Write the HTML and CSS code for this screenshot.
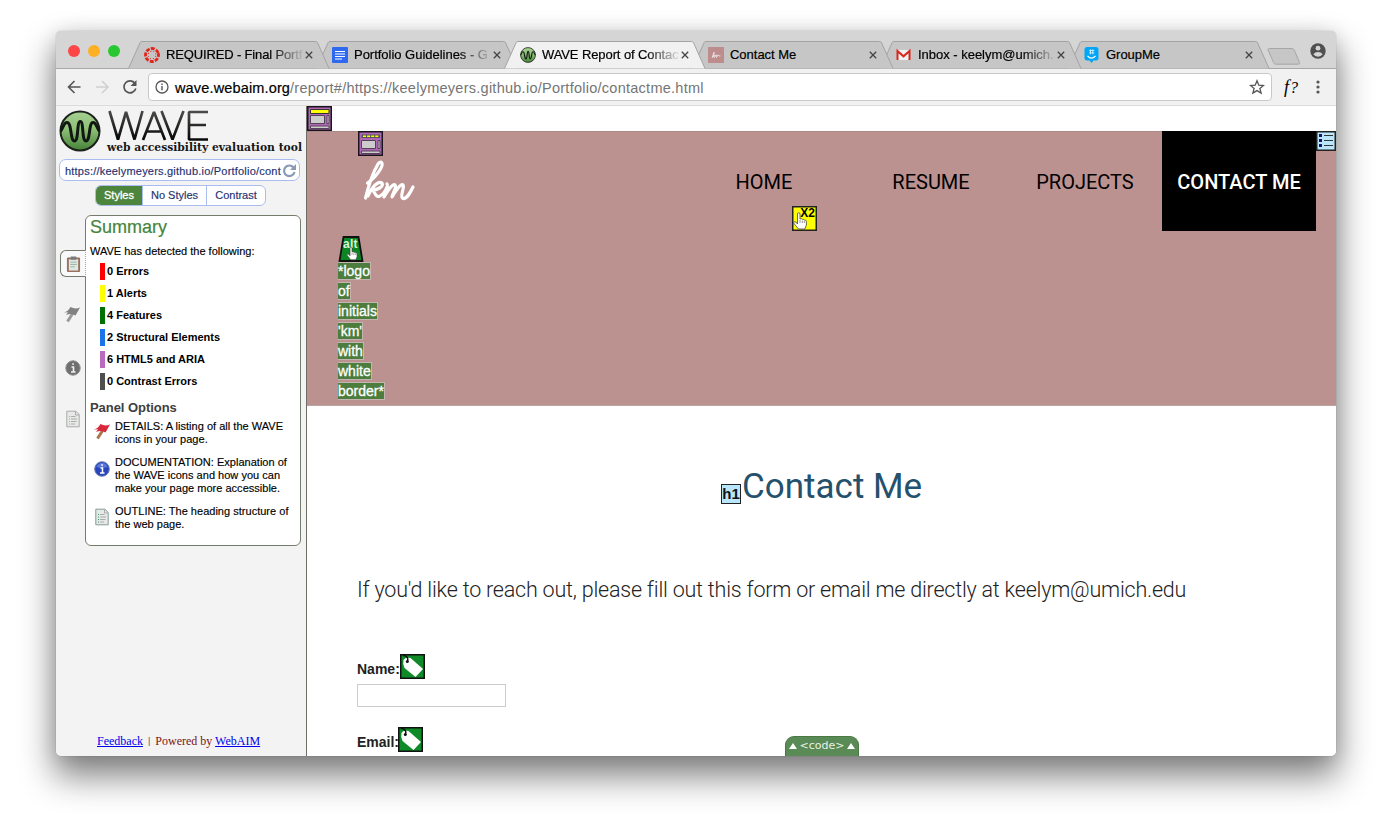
FILE: index.html
```html
<!DOCTYPE html>
<html lang="en">
<head>
<meta charset="utf-8">
<title>WAVE Report of Contact Me</title>
<link rel="stylesheet" href="styles.css">
</head>
<body>
<svg width="0" height="0" class="defs">
  <defs>
    <linearGradient id="leaf" x1="0" y1="0" x2="0" y2="1"><stop offset="0" stop-color="#a5cf90"/><stop offset=".45" stop-color="#8fc078"/><stop offset="1" stop-color="#458236"/></linearGradient>
    <linearGradient id="ink" x1="0" y1="0" x2="0" y2="1"><stop offset="0" stop-color="#4a4a48"/><stop offset="1" stop-color="#080808"/></linearGradient>
    <symbol id="wave-mark" viewBox="0 0 42 42"><circle cx="21" cy="21" r="19.5" fill="url(#leaf)" stroke="#1b211a" stroke-width="2"/><path d="M1.500 21C4 20 4 12.500 8 12.500C13 12.500 11 31 15.500 31C20 31 17.500 11.500 21.300 11.500C25 11.500 22.500 31 27 31C31.500 31 29.500 12.500 34 12.500C38 12.500 38 20 40.500 21" fill="none" stroke="#111711" stroke-width="3"/></symbol>
    <symbol id="tab-shape" viewBox="0 0 202 28"><path d="M.5 27.500L12 1.800Q12.600.5 14 .5H187.500Q189 .5 189.600 1.800L201 27.500" stroke="#a3a3a3"/></symbol>
    <symbol id="close" viewBox="0 0 8 8"><path d="M.8.8L7.200 7.200M7.200.8L.8 7.200" stroke="#444" stroke-width="1.300"/></symbol>
    <symbol id="hand" viewBox="0 0 14 18"><path d="M4.500 10V2Q4.500.8 5.700.8T7 2v5q2-.8 2.500.5q1.500-.5 2 .6q1.700-.3 1.900 1.200V13L11.800 17H5.500L1 11.500Q.4 10 1.700 9.700T4.500 12z" fill="#fff" stroke="#444" stroke-width=".8"/><path d="M7 8v3M9.300 8.500V11M11.300 9v2" stroke="#666" stroke-width=".7"/></symbol>
    <symbol id="label-tag" viewBox="0 0 25 25"><path fill="#0f8a28" stroke="#111" stroke-width="1.500" d="M.75.75h23.500v23.500H.75z"/><path d="M3.500 6Q5 3 10.500 4L23 15L15.500 23L4.500 14Q2.500 10 3.500 6Z" fill="#fff"/><path d="M3 1.500C7 1.500 8.500 4 7.500 7.500" fill="none" stroke="#111" stroke-width="1.500"/><circle cx="7.300" cy="7.500" r="1.500" fill="#111"/></symbol>
    <symbol id="flag" viewBox="0 0 18 18"><path d="M10 8L4.500 16.500" stroke="currentColor" stroke-width="3"/><path d="M1 7.500Q5 6.500 7.500 2Q12 4.500 17 2.500L12.500 10.500Q8 8 3 10L5 7.300Z"/></symbol>
    <symbol id="sheet" viewBox="0 0 14 18"><path d="M.8 1.200H10L13.200 4.500V16.800H.8z" fill="#e7e9e7" stroke="currentColor"/><path d="M9.500 1.500v3.500H13M5 6.500h4.500M5 9h6M5 11.500h5.500M5 14h4" fill="none" stroke="#a2a6a4" stroke-width=".9"/><path d="M3 6.500h1M3 9h1M3 11.500h1M3 14h1"/></symbol>
  </defs>
</svg>
<div class="window">
  <div class="tabstrip">
    <div class="lights"><i class="red"></i><i class="amber"></i><i class="green"></i></div>
    <div class="tab t1"><svg class="shape"><use href="#tab-shape"/></svg>
      <svg class="fav" viewBox="0 0 16 16"><circle cx="8" cy="8" r="6.500" fill="none" stroke="#e1251b" stroke-width="2.800" stroke-dasharray="3.800 1.305" transform="rotate(-17 8 8)"/><circle cx="8" cy="8" r="3.900" fill="none" stroke="#e1251b" stroke-width="1" stroke-dasharray="1 2.063" transform="rotate(14 8 8)"/></svg>
      <span class="title fade">REQUIRED - Final Portf</span><svg class="x"><use href="#close"/></svg></div>
    <div class="tab t2"><svg class="shape"><use href="#tab-shape"/></svg>
      <svg class="fav" viewBox="0 0 16 16"><rect width="16" height="16" rx="1" fill="#2e69f0"/><path d="M3 4.500h10M3 7h10M3 9.500h10M3 12h7" stroke="#fff" stroke-width="1.200"/></svg>
      <span class="title fade">Portfolio Guidelines - G</span><svg class="x"><use href="#close"/></svg></div>
    <div class="tab t3 active"><svg class="shape"><use href="#tab-shape"/></svg>
      <svg class="fav wavefav"><use href="#wave-mark"/></svg>
      <span class="title fade">WAVE Report of Contac</span><svg class="x"><use href="#close"/></svg></div>
    <div class="tab t4"><svg class="shape"><use href="#tab-shape"/></svg>
      <svg class="fav" viewBox="0 0 16 16"><rect width="16" height="16" fill="#bc8d8c"/><path d="M4 10.500Q7 6 6.200 5Q5 6 4.800 10.500Q6.500 6.800 6.800 8T6.500 10.500Q8.500 6.500 8.500 8T8.500 10.500Q10.500 6.500 10.500 8T12.500 9" fill="none" stroke="#f2e4e4" stroke-width=".8"/></svg>
      <span class="title">Contact Me</span><svg class="x"><use href="#close"/></svg></div>
    <div class="tab t5"><svg class="shape"><use href="#tab-shape"/></svg>
      <svg class="fav" viewBox="0 0 16 16"><path d="M1.500 3h12v10h-12z" fill="#f1f1f1"/><path d="M1.500 13V4L7.500 9.300L13.500 4V13" fill="none" stroke="#d5281f" stroke-width="2"/></svg>
      <span class="title fade">Inbox - keelym@umich.</span><svg class="x"><use href="#close"/></svg></div>
    <div class="tab t6"><svg class="shape"><use href="#tab-shape"/></svg>
      <svg class="fav" viewBox="0 0 16 16"><path d="M3 0H12Q14.500 0 14.500 2.500V11Q14.500 13.500 12 13.500H9.500L7.500 16L5.500 13.500H3Q.5 13.500.5 11V2.500Q.5 0 3 0Z" fill="#00a6f7"/><path d="M3.500 8.800Q7.500 13.500 11.500 8.800" stroke="#fff" stroke-width="1.300" fill="none"/><path d="M6.500 2.300v5M8.800 2.300v5M5 3.600h5.300M5 5.900h5.300" stroke="#fff" stroke-width=".7"/></svg>
      <span class="title">GroupMe</span><svg class="x"><use href="#close"/></svg></div>
    <svg class="newtab" viewBox="0 0 34 17"><path d="M2.500.5H25Q26.500.5 27.200 2L32.500 14.500Q33 16 31.500 16.200H8.500Q7.300 16 6.700 14.800L1 2Q.5.8 2.500.5Z" fill="#c6c6c6" stroke="#a6a6a6"/></svg>
    <svg class="person" viewBox="0 0 16 16"><circle cx="8" cy="8" r="7.700" fill="#505050"/><circle cx="8" cy="5.200" r="2.400" fill="#d5d5d5"/><path d="M3.300 11.300Q5 9 8 9T12.700 11.300Q11 13.700 8 13.700T3.300 11.300Z" fill="#d5d5d5"/></svg>
  </div>
  <div class="toolbar">
    <svg class="nav-ico" viewBox="0 0 16 16"><path d="M14.500 8H2.500M8.500 2l-6 6 6 6" fill="none" stroke="#555" stroke-width="1.600"/></svg>
    <svg class="nav-ico" viewBox="0 0 16 16"><path d="M2 8h12M8 2l6 6-6 6" fill="none" stroke="#d0d0d0" stroke-width="1.600"/></svg>
    <svg class="nav-ico" viewBox="0 0 16 16"><path d="M13 4.500A6 6 0 1 0 13.800 9.500" fill="none" stroke="#555" stroke-width="1.700"/><path d="M14.500 1V7H8.500z" fill="#555"/></svg>
    <div class="omnibox">
      <svg class="info" viewBox="0 0 14 14"><circle cx="7" cy="7" r="6" fill="none" stroke="#555" stroke-width="1.300"/><path d="M7 6v4.300M7 3.500v1.500" stroke="#555" stroke-width="1.400"/></svg>
      <span class="url"><b>wave.webaim.org</b>/report#/https://keelymeyers.github.io/Portfolio/contactme.html</span>
      <svg class="star" viewBox="0 0 16 16"><path d="M8 1.800L9.800 6.200L14.500 6.500L10.900 9.500L12.100 14.100L8 11.600L3.900 14.100L5.100 9.500L1.500 6.500L6.200 6.200Z" fill="none" stroke="#555" stroke-width="1.300"/></svg>
    </div>
    <span class="fx"><i>f</i><i class="q">?</i></span>
    <svg class="dotsmenu" viewBox="0 0 4 14"><circle cx="2" cy="2" r="1.600"/><circle cx="2" cy="7" r="1.600"/><circle cx="2" cy="12" r="1.600"/></svg>
  </div>
  <div class="content">
    <aside class="side">
      <svg class="logo" viewBox="0 0 250 50">
        <use href="#wave-mark" x="3" y="4" width="42" height="42"/>
        <path d="M53.500 5L62 33.500L70 6L78.500 33.500L86.500 5M87 34L98 6L109 34M90.500 25.500h15M105.500 5L116.500 33.500L127.500 5M152 6H133V33.500H152M133 19h17" fill="none" stroke="url(#ink)" stroke-width="2.700" stroke-linejoin="bevel"/>
        <text x="51" y="45" class="tagline" textLength="195" lengthAdjust="spacingAndGlyphs">web accessibility evaluation tool</text>
      </svg>
      <div class="addr"><span>https://keelymeyers.github.io/Portfolio/cont</span><svg viewBox="0 0 15 15"><path d="M11.500 4.500A5.300 5.300 0 1 0 12.500 9" fill="none" stroke="#8a9bb3" stroke-width="2.200"/><path d="M14 1v6H8z" fill="#8a9bb3"/></svg></div>
      <div class="modes"><span class="on">Styles</span><span>No Styles</span><span>Contrast</span></div>
      <div class="panelrow">
        <div class="rail">
          <div class="railtab"><svg class="clip" viewBox="0 0 16 18"><rect x="1" y="2" width="14" height="15.500" rx="1" fill="#9b6f5d"/><path d="M3 4h10v12H3z" fill="#dfe8e3"/><path d="M5 1h6v3.500H5z" fill="#777b7b"/><path d="M4.500 7h7M4.500 9.500h7M4.500 12h5" stroke="#91b0a0" stroke-width=".9"/></svg></div>
          <svg class="r-flag"><use href="#flag"/></svg>
          <svg class="r-info" viewBox="0 0 16 16"><circle cx="8" cy="8" r="7.200" fill="#6f6f6f" stroke="#8d8d8d"/><path d="M6.500 7H8.500V12M6 12h4.500M7.200 4h1.700" stroke="#f2f2f2" stroke-width="1.600" fill="none"/></svg>
          <svg class="r-sheet"><use href="#sheet"/></svg>
        </div>
        <section class="panel">
          <h2>Summary</h2>
          <p class="lead">WAVE has detected the following:</p>
          <ul>
            <li class="c1"><span>0 Errors</span></li><li class="c2"><span>1 Alerts</span></li><li class="c3"><span>4 Features</span></li><li class="c4"><span>2 Structural Elements</span></li><li class="c5"><span>6 HTML5 and ARIA</span></li><li class="c6"><span>0 Contrast Errors</span></li>
          </ul>
          <h3>Panel Options</h3>
          <div class="opt"><svg class="o-flag"><use href="#flag"/></svg><p>DETAILS: A listing of all the WAVE<br>icons in your page.</p></div>
          <div class="opt"><svg class="o-info" viewBox="0 0 16 16"><circle cx="8" cy="8" r="7.300" fill="#2746bd" stroke="#6e7dae"/><path d="M2.500 6Q3.500 2.300 8 2T13.500 6Q8 8 2.500 6Z" fill="#5976d8"/><path d="M6.500 7H8.500V12M6 12h4.500M7.200 4h1.700" stroke="#fff" stroke-width="1.500" fill="none"/></svg><p>DOCUMENTATION: Explanation of<br>the WAVE icons and how you can<br>make your page more accessible.</p></div>
          <div class="opt"><svg class="o-sheet"><use href="#sheet"/></svg><p>OUTLINE: The heading structure of<br>the web page.</p></div>
        </section>
      </div>
      <footer><a>Feedback</a><em>|</em>Powered by <a>WebAIM</a></footer>
    </aside>
    <main>
      <svg class="mark m-header" viewBox="0 0 25 25"><path d="M.75.75h23.500v23.500H.75z" fill="#b067b5" stroke="#1c141d" stroke-width="1.500"/><path d="M3.500 3.500h18.500v4H3.500z" fill="#ff0" stroke="#333"/><path d="M3.500 9.500h14v8h-14zM20 9.500h2v8h-2zM3.500 20h18.500v2.500H3.500z" fill="#ccc" stroke="#544258"/></svg>
      <header>
        <svg class="mark m-nav" viewBox="0 0 25 25"><path d="M.75.75h23.500v23.500H.75z" fill="#b067b5" stroke="#1c141d" stroke-width="1.500"/><path d="M3.500 3.500h18.500v3.500H3.500z" fill="#555"/><path d="M5 5.300h15.500" stroke="#ff0" stroke-width="1.600" stroke-dasharray="3 1.100"/><path d="M3.500 9.500h14v8h-14zM20 9.500h2v8h-2zM3.500 20h18.500v2.500H3.500z" fill="#ccc" stroke="#544258"/></svg>
        <svg class="km" viewBox="0 0 56 44"><g fill="none" stroke="#fff" stroke-linecap="round" stroke-linejoin="round"><path d="M4.500 38C7 28 11 14 17 4C20 0 23 3 19.500 9C16 15 11 20 6.500 23" stroke-width="3.200"/><path d="M7 36C10 28 17 20 21 23C23 27 16 30 11 30C14 31 14 37 18 36.500C22 35 24 32 26 27" stroke-width="3.200"/><path d="M26 24C28 25 24 34 23 37C27 30 32 23 34 25C36 27 32 32 31 37C35 30 40 23 42 25C44 28 38 37 42 38.500C46 39 49 33 52 27" stroke-width="3.200"/></g></svg>
        <nav><a class="home">HOME</a><a>RESUME</a><a>PROJECTS</a><a class="here">CONTACT ME</a></nav>
        <svg class="mark m-list" viewBox="0 0 20 20"><path d="M.75.75h18.500v18.500H.75z" fill="#b9e6fa" stroke="#222" stroke-width="1.500"/><path d="M3 3h3v3H3zM3 8h3v3H3zM3 13h3v3H3z" fill="#17126b"/><path d="M8 4.500h9M8 9.500h9M8 14.500h9" stroke="#333" stroke-width="1.200"/></svg>
        <svg class="mark m-dup" viewBox="0 0 25 25"><path d="M.75.75h23.500v23.500H.75z" fill="#ff0" stroke="#222" stroke-width="1.500"/><text x="8.300" y="11" class="x2">X2</text><use href="#hand" x="1" y="6" width="14" height="18"/></svg>
        <svg class="mark m-alt" viewBox="0 0 26 26"><path d="M5.500 1H20.500L24.500 25H1.500Z" fill="#0d8523" stroke="#111" stroke-width="1.800"/><text x="5" y="11.500" class="alt">alt</text><use href="#hand" x="8.500" y="10" width="11" height="15"/></svg>
        <p class="alttext"><span>*logo</span><br><span>of</span><br><span>initials</span><br><span>'km'</span><br><span>with</span><br><span>white</span><br><span>border*</span></p>
      </header>
      <h1><span class="h1mark">h1</span>Contact Me</h1>
      <p class="intro">If you'd like to reach out, please fill out this form or email me directly at keelym@umich.edu</p>
      <form>
        <div class="field"><label>Name:<svg><use href="#label-tag"/></svg></label><input type="text" aria-label="Name"></div>
        <div class="field email"><label>Email:<svg><use href="#label-tag"/></svg></label></div>
      </form>
      <div class="code"><i></i><span>&lt;code&gt;</span><i></i></div>
    </main>
  </div>
</div>
</body>
</html>
```
FILE: styles.css
```css
* { box-sizing: border-box; }
body { margin: 0; width: 1392px; height: 836px; overflow: hidden; background: #fff; padding: 31px 0 0 56px; font-family: "Liberation Sans", Arial, sans-serif; color: #000; }
.defs { position: absolute; }
h1, h2, h3, p, ul { margin: 0; padding: 0; }
.window { width: 1280px; height: 725px; border-radius: 5px; box-shadow: 0 0 1px rgba(0,0,0,.45), 0 19px 34px 2px rgba(0,0,0,.48), 0 2px 20px rgba(0,0,0,.12); }
.tabstrip { height: 38px; background: #d5d5d5; border-radius: 5px 5px 0 0; border-bottom: 1px solid #a8a8a8; display: flex; padding-top: 10px; position: relative; }
.lights { width: 72px; padding: 4px 0 0 12px; display: flex; gap: 8px; flex: none; }
.lights i { width: 12px; height: 12px; border-radius: 50%; }
.red { background: #fc4648; } .amber { background: #fdb024; } .green { background: #29c732; }
.tab { width: 202px; height: 28px; margin-right: -14px; position: relative; display: flex; flex: none; align-items: center; padding: 0 14px 0 16px; }
.t1 { z-index: 6; } .t2 { z-index: 5; } .t3 { z-index: 7; } .t4 { z-index: 4; } .t5 { z-index: 3; } .t6 { z-index: 2; }
.shape { position: absolute; inset: 0; width: 202px; height: 28px; fill: #c6c6c6; z-index: -1; }
.active .shape { fill: #f1f1f1; }
.fav { width: 16px; height: 16px; margin-right: 6px; flex: none; }
.title { font-size: 13px; letter-spacing: -.02px; width: 139px; white-space: nowrap; line-height: 18px; flex: none; -webkit-text-stroke: .2px; }
.t1 .title { letter-spacing: -.15px; } .t3 .title { letter-spacing: -.1px; }
.fade { -webkit-mask-image: linear-gradient(90deg, #000 75%, transparent 100%); mask-image: linear-gradient(90deg, #000 75%, transparent 100%); }
.x { width: 8px; height: 8px; margin-left: 0; flex: none; }
.newtab { width: 34px; height: 17px; margin: 7px 0 0 11px; flex: none; }
.person { width: 16px; height: 16px; margin: 2px 0 0 9px; flex: none; }
.toolbar { height: 37px; background: #f1f1f1; border-bottom: 1px solid #dcdcdc; display: flex; align-items: center; padding-left: 10px; }
.nav-ico { width: 16px; height: 16px; margin-right: 12px; flex: none; }
.nav-ico + .nav-ico + .nav-ico { margin-right: 10px; }
.omnibox { width: 1124px; height: 28px; background: #fff; border: 1px solid #c9c9c9; border-radius: 4px; display: flex; align-items: center; padding: 0 6px; flex: none; }
.info { width: 14px; height: 14px; margin-right: 6px; }
.url { font-size: 14.500px; line-height: 18px; letter-spacing: .26px; color: #757575; flex: 1; white-space: nowrap; padding-top: 1px; }
.url b { font-weight: 400; color: #000; letter-spacing: .15px; -webkit-text-stroke: .2px; }
.star { width: 16px; height: 16px; }
.fx { font: 18px "Liberation Serif", serif; margin-left: 12px; width: 32px; letter-spacing: 1px; }
.q { font-size: 16px; }
.dotsmenu { width: 4px; height: 14px; fill: #555; }
.content { display: flex; height: 650px; border-radius: 0 0 5px 5px; overflow: hidden; }
.side { width: 251px; background: #f3f3f3; border-right: 1px solid #6d6f68; display: flex; flex-direction: column; flex: none; }
.logo { width: 250px; height: 50px; flex: none; }
.tagline { font: bold 11.500px "DejaVu Serif", serif; fill: #161616; }
.addr { width: 241px; height: 22px; margin: 3px 0 0 3px; background: #fff; border: 1px solid #aabdf0; border-radius: 7px; display: flex; align-items: center; padding-left: 5px; font-size: 11px; color: #24306f; white-space: nowrap; flex: none; }
.addr span { width: 217px; letter-spacing: .21px; padding-top: 1px; -webkit-text-stroke: .15px; } .addr svg { width: 15px; height: 15px; flex: none; }
.modes { display: flex; width: 171px; height: 21px; margin: 4px 0 0 39px; border: 1px solid #aabdf0; border-radius: 6px; background: #fff; overflow: hidden; font-size: 11px; color: #24306f; line-height: 19px; text-align: center; flex: none; -webkit-text-stroke: .15px; }
.modes span { flex: 0 0 64px; border-left: 1px solid #aabdf0; }
.modes span:last-child { flex: 1; }
.modes .on { flex: 0 0 46px; background: #4d853c; color: #fff; border: 0; -webkit-text-stroke: .3px; }
.panelrow { display: flex; margin-top: 9px; flex: none; }
.rail { width: 30px; height: 331px; display: flex; flex-direction: column; padding-top: 35px; align-items: flex-end; z-index: 1; flex: none; }
.railtab { width: 26px; height: 27px; background: #f9f9f9; border: 1px solid #747d6c; border-right: 1px dotted #aaa; border-radius: 6px 0 0 6px; padding: 4px 0 0 5px; }
.clip { width: 15px; height: 18px; }
.r-flag { width: 18px; height: 18px; margin: 28px 5px 0 0; color: #999; fill: #818181; }
.r-info { width: 16px; height: 16px; margin: 37px 5px 0 0; }
.r-sheet { width: 14px; height: 18px; margin: 34px 6px 0 0; color: #aaa; stroke: #aaa; }
.panel { width: 216px; height: 331px; margin-left: -1px; background: #fff; border: 1px solid #747d6c; border-radius: 6px; padding: 1px 0 0 4px; flex: none; }
h2 { font-weight: 400; font-size: 18px; line-height: 21px; color: #44853c; -webkit-text-stroke: .2px; }
.lead { font-size: 11px; line-height: 13px; margin: 7px 0 5px; -webkit-text-stroke: .15px; }
ul { list-style: none; padding-left: 10px; }
li { font-size: 11px; font-weight: 700; line-height: 17px; height: 17px; margin-bottom: 5px; border-left: 5px solid; padding-left: 2px; }
li { border-color: var(--c); }
.c1 { --c: #f00; } .c2 { --c: #ff0; } .c3 { --c: #007000; } .c4 { --c: #1a73e8; } .c5 { --c: #b96bc0; } .c6 { --c: #4f4f4f; }
h3 { font-size: 13px; line-height: 15px; color: #404040; margin: 10px 0 5px; letter-spacing: -.05px; }
.opt { display: flex; margin-bottom: 10px; font-size: 11px; line-height: 13px; padding-left: 3px; white-space: nowrap; -webkit-text-stroke: .15px; }
.opt p { margin-left: 4px; letter-spacing: .02px; }
.opt svg { width: 18px; height: 18px; flex: none; }
.opt svg, .side svg { -webkit-text-stroke: 0; }
.o-flag { margin-top: 2px; color: #a8764f; fill: #d8283a; }
.opt .o-info { width: 16px; height: 16px; margin: 5px 1px 0; }
.opt .o-sheet { width: 14px; margin: 3px 2px 0; color: #839b99; stroke: #3c9a72; }
footer { margin-top: auto; padding: 0 0 7px 41px; font: 12px/16px "Liberation Serif", serif; color: #7a1414; white-space: nowrap; }
footer a { color: #00e; text-decoration: underline; } footer em { font: 9px "Liberation Sans", sans-serif; margin: 0 5px; color: #555; vertical-align: 1px; }
main { width: 1029px; background: #fff; position: relative; padding-top: 25px; flex: none; }
.mark { position: absolute; }
.m-header { left: 0; top: 0; width: 25px; height: 25px; }
header { height: 275px; background: #bc9290; border-top: 1px solid #a98886; border-bottom: 1px solid #bba5a3; position: relative; display: flex; }
.m-nav { left: 51px; top: -1px; width: 25px; height: 25px; }
.km { width: 56px; height: 44px; margin: 28px 0 0 54px; }
nav { display: flex; margin: -1px 20px 0 auto; height: 100px; font: 20px/102px Roboto, sans-serif; text-align: center; }
nav a { width: 154px; } nav .home { width: 180px; }
nav .here { width: 154px; background: #000; color: #fff; font-weight: 500; }
.m-list { right: 0; top: -1px; width: 20px; height: 20px; }
.m-dup { left: 485px; top: 74px; width: 25px; height: 25px; }
.x2 { font: bold 12px "Liberation Sans", sans-serif; }
.m-alt { left: 31px; top: 104px; width: 26px; height: 26px; }
.alt { font: bold 12px "Liberation Sans", sans-serif; letter-spacing: .3px; fill: #d9f5dc; }
.alttext { position: absolute; left: 31px; top: 129px; font-size: 14px; line-height: 20px; color: #fff; -webkit-text-stroke: .3px; }
.alttext span { background: #4d7d3e; border: 1px solid #c5b5b1; border-left: 0; }
h1 { font: 400 35px/42px Roboto, sans-serif; color: #25516c; display: flex; margin: 60px 0 0 414px; }
.h1mark { width: 20px; height: 20px; border: 1.500px solid #222; background: #b9e6fa; color: #111; font: bold 15px/18px "Liberation Sans", sans-serif; text-align: center; margin: 18px 1px 0 0; }
.intro { font: 300 21.500px/28px Roboto, sans-serif; letter-spacing: -.21px; color: #222; margin: 68px 0 0 50px; white-space: nowrap; }
form { margin: 50px 0 0 50px; }
.field { height: 73px; }
label { display: flex; font-weight: 700; font-size: 14px; line-height: 30px; color: #222; height: 30px; }
label svg { width: 25px; height: 25px; }
.email svg { margin-left: -1px; }
input { display: block; width: 149px; height: 23px; border: 1px solid #ccc; background: #fff; padding: 0; }
.code { position: absolute; left: 478px; bottom: 0; width: 74px; height: 20px; background: #5a8a55; border: 1px solid #4a7a43; border-bottom: 0; border-radius: 9px 9px 0 0; color: #e9f1e7; display: flex; align-items: center; justify-content: center; gap: 3px; font: 11px/14px "DejaVu Sans", sans-serif; padding-bottom: 2px; }
.code i { border: 4.500px solid transparent; border-top: 0; border-bottom: 6px solid #fff; }
```
